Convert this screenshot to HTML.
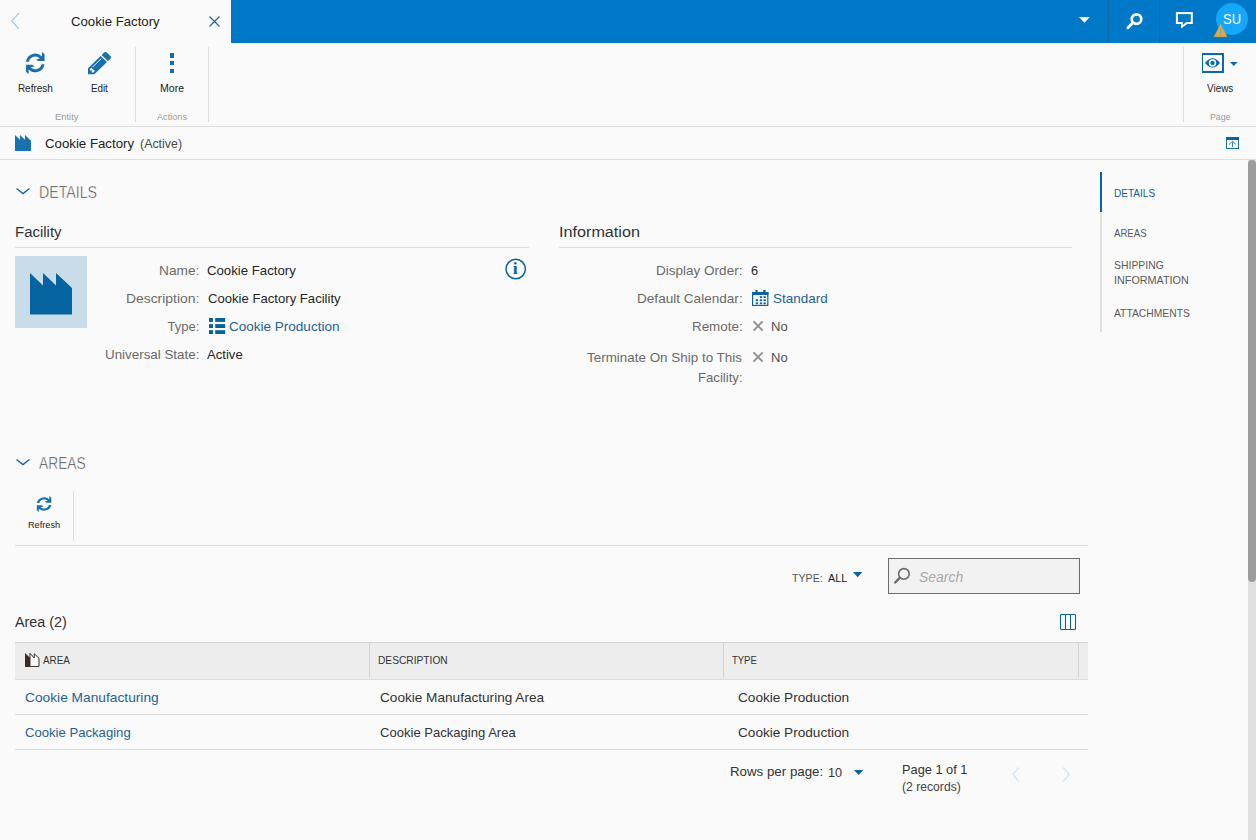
<!DOCTYPE html>
<html lang="en">
<head>
<meta charset="utf-8">
<title>Cookie Factory</title>
<style>
*{box-sizing:border-box;margin:0;padding:0}
html,body{width:1256px;height:840px;overflow:hidden;background:#fafafa;font-family:"Liberation Sans",sans-serif;color:#1f1f1f;font-size:13px}
.abs{position:absolute}
#top{position:absolute;left:0;top:0;width:1256px;height:43px;background:#0078c8}
#tab{position:absolute;left:0;top:0;width:231px;height:43px;background:#fafafa}
.t{position:absolute;white-space:nowrap;line-height:1;transform-origin:0 0}
.hl{position:absolute;height:1px;background:#dedede}
.vl{position:absolute;width:1px;background:#dedede}
svg{position:absolute;overflow:visible}
</style>
</head>
<body>
<div id="top"></div>
<div id="tab"></div>
<!-- tab -->
<svg style="left:11px;top:13px" width="8" height="16" viewBox="0 0 8 16"><path d="M7.800 0.200 L0.800 7.900 L7.800 15.700" fill="none" stroke="#a4cbe4" stroke-width="1.300"/></svg>
<svg style="left:209.100px;top:15.600px" width="11" height="11" viewBox="0 0 11 11"><path d="M0.500 0.500 L10.500 10.500 M10.500 0.500 L0.500 10.500" fill="none" stroke="#1c64a0" stroke-width="1.150"/></svg>

<!-- top right icons -->
<svg style="left:1079px;top:17px" width="11" height="6" viewBox="0 0 11 6"><path d="M0 0 H10.800 L5.400 5.800 Z" fill="#fff"/></svg>
<div class="abs" style="left:1108px;top:0;width:0;height:43px;border-left:1px dotted #0564a6"></div>
<div class="abs" style="left:1159px;top:0;width:0;height:43px;border-left:1px dotted #0564a6"></div>
<svg style="left:1126px;top:12px" width="18" height="18" viewBox="0 0 18 18"><circle cx="10.500" cy="7.100" r="4.800" fill="none" stroke="#fff" stroke-width="2.700"/><path d="M6.800 10.800 L1.900 15.700" stroke="#fff" stroke-width="3" stroke-linecap="round"/></svg>
<svg style="left:1176px;top:12px" width="17" height="17" viewBox="0 0 17 17"><rect x="0.900" y="1.100" width="14.900" height="9.900" fill="none" stroke="#fff" stroke-width="2"/><path d="M5 11 V16.400 L12.600 11 Z" fill="#fff"/><path d="M6.800 10 V13 L10.200 10 Z" fill="#0078c8"/></svg>
<div class="abs" style="left:1216px;top:3px;width:32px;height:32px;border-radius:16px;background:#14a7fb"></div>
<svg style="left:1213.600px;top:23.700px" width="13.100" height="12.900" viewBox="0 0 14 13.400" preserveAspectRatio="none"><path d="M7 0.300 L13.800 13.200 H0.200 Z" fill="#e3a93f" stroke="#e3a93f" stroke-width="0.600" stroke-linejoin="round"/><rect x="6.400" y="5" width="1.200" height="4.300" fill="#8aa0b4"/><rect x="6.400" y="10.300" width="1.200" height="1.300" fill="#8aa0b4"/></svg>

<!-- ribbon -->
<div class="hl" style="left:0;top:126px;width:1256px"></div>
<div class="vl" style="left:135px;top:47px;height:75px"></div>
<div class="vl" style="left:208px;top:47px;height:75px"></div>
<div class="vl" style="left:1183px;top:47px;height:75px"></div>
<svg style="left:0;top:0" width="1" height="1"><g transform="translate(35.300 62.950)" fill="#1a6fae"><path d="M-9.210 -1.300 A9.300 9.300 0 0 1 6.700 -6.450 L6.700 -10.800 L7.300 -10.800 L9.300 -8.500 L9.300 -1.900 L2.800 -1.900 L0.900 -3.500 L4.600 -4.400 A6.400 6.400 0 0 0 -6.270 -1.300 Z"/><path d="M-9.210 -1.300 A9.300 9.300 0 0 1 6.700 -6.450 L6.700 -10.800 L7.300 -10.800 L9.300 -8.500 L9.300 -1.900 L2.800 -1.900 L0.900 -3.500 L4.600 -4.400 A6.400 6.400 0 0 0 -6.270 -1.300 Z" transform="rotate(180)"/></g></svg>
<svg style="left:87.800px;top:51.800px" width="23" height="22.300" viewBox="128 149 1515 1515" preserveAspectRatio="none"><path d="M491 1536l91-91-235-235-91 91v107h128v128h107zm523-928q0-22-22-22-10 0-17 7l-542 542q-7 7-7 17 0 22 22 22 10 0 17-7l542-542q7-7 7-17zm-54-192l416 416-832 832h-416v-416zm683 96q0 53-37 90l-166 166-416-416 166-165q36-38 90-38 53 0 91 38l235 234q37 39 37 91z" fill="#1a6fae"/></svg>
<div class="abs" style="left:170px;top:53px;width:4px;height:4.500px;background:#0f6fb0"></div>
<div class="abs" style="left:170px;top:61px;width:4px;height:4px;background:#0f6fb0"></div>
<div class="abs" style="left:170px;top:68.500px;width:4px;height:4.500px;background:#0f6fb0"></div>
<!-- views -->
<div class="abs" style="left:1202px;top:53px;width:22px;height:20px;border:2px solid #0a6ab0;border-left-width:1.700px;background:#fff"></div>
<svg style="left:1205.300px;top:57.900px" width="15" height="9.800" viewBox="0 0 15 9.800"><path d="M0 4.900 Q7.500 -4.400 15 4.900 Q7.500 14.200 0 4.900 Z" fill="#0a6ab0"/><circle cx="7.500" cy="4.900" r="3.700" fill="#fff"/><circle cx="7.500" cy="4.900" r="2.200" fill="#0a6ab0"/></svg>
<svg style="left:1230.200px;top:62.200px" width="7.600" height="4" viewBox="0 0 7.600 4"><path d="M0 0 H7.600 L3.800 4 Z" fill="#0a6ab0"/></svg>

<!-- title bar -->
<svg style="left:15px;top:135px" width="16" height="16" viewBox="0 0 16 16"><path d="M0 0 L5 4.800 V0 L10 4.800 V0 L16 5.700 V16 H0 Z" fill="#1872ad"/></svg>
<div class="hl" style="left:0;top:159px;width:1256px"></div>
<div class="abs" style="left:1226px;top:137px;width:13px;height:12px;border:1px solid #1470b4;border-top:3px solid #0a64a0;background:#fff"></div>
<svg style="left:1228px;top:140px" width="9" height="8" viewBox="0 0 9 8"><path d="M4.500 7 V1.300 M0.900 4.600 L4.500 1.200 L8.100 4.600" fill="none" stroke="#3b86c4" stroke-width="1"/></svg>

<!-- scrollbar -->
<div class="abs" style="left:1248px;top:160px;width:8px;height:680px;background:#e0e0e0"></div>
<div class="abs" style="left:1248px;top:160px;width:8px;height:422px;border-radius:4px;background:#9c9c9c"></div>

<!-- side nav -->
<div class="vl" style="left:1100px;top:212px;width:2px;height:120px;background:#e0e0e0"></div>
<div class="abs" style="left:1100px;top:172px;width:2px;height:40px;background:#0a64a0"></div>

<!-- DETAILS section -->
<svg style="left:16px;top:188px" width="14" height="7" viewBox="0 0 14 7"><path d="M0.500 0.500 L7 5.600 L13.500 0.500" fill="none" stroke="#0a64a0" stroke-width="1.300"/></svg>
<div class="hl" style="left:15px;top:247px;width:514px"></div>
<div class="abs" style="left:15px;top:256px;width:72px;height:72px;background:#c9dcea"></div>
<svg style="left:30px;top:272.500px" width="42" height="41.500" viewBox="0 0 42 41.500"><path d="M0 0 L13 12.500 V0 L26 12.500 V0 L42 15 V41.500 H0 Z" fill="#0563a0"/></svg>
<svg style="left:209px;top:318px" width="16.200" height="16" viewBox="0 0 16.200 16"><g fill="#0563a0"><rect x="0" y="0" width="4" height="3.900"/><rect x="6.200" y="0" width="10" height="3.900"/><rect x="0" y="6.100" width="4" height="3.900"/><rect x="6.200" y="6.100" width="10" height="3.900"/><rect x="0" y="12.200" width="4" height="3.800"/><rect x="6.200" y="12.200" width="10" height="3.800"/></g></svg>
<!-- info icon -->
<svg style="left:0;top:0" width="1" height="1"><circle cx="515.700" cy="269" r="9.700" fill="none" stroke="#0a64a0" stroke-width="1.500"/></svg>
<div class="t" id="info-i" style="left:512.800px;top:260.400px;font-size:17.700px;font-weight:bold;color:#0a64a0;font-family:'Liberation Serif',serif">i</div>

<div class="hl" style="left:559px;top:247px;width:513px"></div>
<svg style="left:752.400px;top:290px" width="16.400" height="16" viewBox="0 0 16.400 16"><rect x="0.600" y="2.600" width="15.200" height="12.800" fill="#fff" stroke="#0a64a0" stroke-width="1.200"/><rect x="0" y="2" width="16.400" height="3" fill="#0a64a0"/><rect x="3.400" y="0" width="2.200" height="2.500" fill="#0a64a0"/><rect x="11.200" y="0" width="2.400" height="2.500" fill="#0a64a0"/><g fill="#0a64a0"><rect x="7.800" y="6.200" width="2.300" height="1.900"/><rect x="11.500" y="6.200" width="2.300" height="1.900"/><rect x="3.700" y="9.300" width="2.300" height="1.900"/><rect x="7.800" y="9.300" width="2.300" height="1.900"/><rect x="11.500" y="9.300" width="2.300" height="1.900"/><rect x="3.700" y="12.400" width="2.300" height="1.800"/><rect x="7.800" y="12.400" width="2.300" height="1.800"/><rect x="11.500" y="12.400" width="2.300" height="1.800"/></g></svg>
<svg style="left:753.400px;top:321px" width="10.200" height="10" viewBox="0 0 10.200 10"><path d="M0.500 0.400 L9.700 9.600 M9.700 0.400 L0.500 9.600" stroke="#8e8e8e" stroke-width="1.900" fill="none"/></svg>
<svg style="left:753.400px;top:352px" width="10.200" height="10" viewBox="0 0 10.200 10"><path d="M0.500 0.400 L9.700 9.600 M9.700 0.400 L0.500 9.600" stroke="#8e8e8e" stroke-width="1.900" fill="none"/></svg>

<!-- AREAS section -->
<svg style="left:16px;top:459px" width="14" height="7" viewBox="0 0 14 7"><path d="M0.500 0.500 L7 5.600 L13.500 0.500" fill="none" stroke="#0a64a0" stroke-width="1.300"/></svg>
<svg style="left:0;top:0" width="1" height="1"><g transform="translate(44.100 504) scale(0.780 0.720)" fill="#1a6fae"><path d="M-9.210 -1.300 A9.300 9.300 0 0 1 6.700 -6.450 L6.700 -10.800 L7.300 -10.800 L9.300 -8.500 L9.300 -1.900 L2.800 -1.900 L0.900 -3.500 L4.600 -4.400 A6.400 6.400 0 0 0 -6.270 -1.300 Z"/><path d="M-9.210 -1.300 A9.300 9.300 0 0 1 6.700 -6.450 L6.700 -10.800 L7.300 -10.800 L9.300 -8.500 L9.300 -1.900 L2.800 -1.900 L0.900 -3.500 L4.600 -4.400 A6.400 6.400 0 0 0 -6.270 -1.300 Z" transform="rotate(180)"/></g></svg>
<div class="vl" style="left:73px;top:491px;height:50px"></div>
<div class="hl" style="left:15px;top:545px;width:1073px"></div>

<svg style="left:853.300px;top:572.200px" width="9.400" height="5.200" viewBox="0 0 9.400 5.200"><path d="M0 0 H9.400 L4.700 5.200 Z" fill="#0a64a0"/></svg>
<div class="abs" style="left:888px;top:558px;width:192px;height:36px;border:1px solid #6e6e6e;background:#f2f2f2"></div>
<svg style="left:894px;top:568px" width="16" height="16.500" viewBox="0 0 16 16.500"><circle cx="9.900" cy="5.900" r="5.300" fill="none" stroke="#6a6a6a" stroke-width="1.600"/><path d="M5.700 9.800 L1.200 14.500" stroke="#6a6a6a" stroke-width="2.400" stroke-linecap="round"/></svg>

<svg style="left:1060px;top:614px" width="16" height="16" viewBox="0 0 16 16"><rect x="0.500" y="0.500" width="15" height="15" rx="0.800" fill="#fdfdfd" stroke="#0a64a0" stroke-width="1.100"/><path d="M5.500 0.500 V15.500 M10.500 0.500 V15.500" stroke="#0a64a0" stroke-width="1.100"/></svg>

<!-- table -->
<div class="abs" style="left:15px;top:642px;width:1073px;height:38px;background:#ededed;border-top:1px solid #d6d6d6;border-bottom:1px solid #dcdcdc"></div>
<div class="vl" style="left:369px;top:643px;height:35px;background:#d2d2d2"></div>
<div class="vl" style="left:723px;top:643px;height:35px;background:#d2d2d2"></div>
<div class="vl" style="left:1078px;top:643px;height:35px;background:#d2d2d2"></div>
<svg style="left:24.700px;top:653px" width="14.600" height="14" viewBox="0 0 14.600 14"><path d="M5 0.300 L9.300 5 V0.800 L14 5.200 V13.400 H5 Z" fill="#fff" stroke="#3a2a2a" stroke-width="1"/><path d="M0 0 L5 4.800 V14 H0 Z" fill="#3a2a2a"/></svg>
<div class="hl" style="left:15px;top:714px;width:1073px"></div>
<div class="hl" style="left:15px;top:749px;width:1073px"></div>

<!-- pager -->
<svg style="left:853.800px;top:770px" width="9.400" height="5" viewBox="0 0 9.400 5"><path d="M0 0 H9.400 L4.700 5 Z" fill="#0a64a0"/></svg>
<svg style="left:1012px;top:766.500px" width="8" height="15" viewBox="0 0 8 15"><path d="M6.800 0.500 L0.700 7.500 L6.800 14.500" fill="none" stroke="#d5e5f0" stroke-width="1.300"/></svg>
<svg style="left:1061.500px;top:766.500px" width="8" height="15" viewBox="0 0 8 15"><path d="M1.200 0.500 L7.300 7.500 L1.200 14.500" fill="none" stroke="#d5e5f0" stroke-width="1.300"/></svg>

<div class="t" id="tabtitle" style="left:70.83px;top:15px;font-size:13px;color:#222;transform:scaleX(1.0142);">Cookie Factory</div>
<div class="t" id="r-refresh" style="left:17.90px;top:84px;font-size:10px;color:#222;transform:scaleX(1.0000);">Refresh</div>
<div class="t" id="r-edit" style="left:90.51px;top:84px;font-size:10px;color:#222;transform:scaleX(0.9767);">Edit</div>
<div class="t" id="r-more" style="left:160.14px;top:84px;font-size:10px;color:#222;transform:scaleX(1.0530);">More</div>
<div class="t" id="r-entity" style="left:55.30px;top:113px;font-size:9px;color:#9a9a9a;transform:scaleX(1.0426);">Entity</div>
<div class="t" id="r-actions" style="left:157.17px;top:113px;font-size:9px;color:#9a9a9a;transform:scaleX(1.0170);">Actions</div>
<div class="t" id="r-views" style="left:1206.92px;top:84px;font-size:10px;color:#222;transform:scaleX(0.9903);">Views</div>
<div class="t" id="r-page" style="left:1209.85px;top:113px;font-size:9px;color:#9a9a9a;transform:scaleX(0.9689);">Page</div>
<div class="t" id="tb-title" style="left:45.22px;top:137px;font-size:13px;color:#222;transform:scaleX(1.0184);">Cookie Factory</div>
<div class="t" id="tb-active" style="left:140.37px;top:138px;font-size:12px;color:#4a4a4a;transform:scaleX(1.0347);">(Active)</div>
<div class="t" id="h-details" style="left:39.40px;top:185px;font-size:16px;color:#3c3838;transform:scaleX(0.8858);-webkit-text-stroke:0.5px #fafafa;">DETAILS</div>
<div class="t" id="h-fac" style="left:14.89px;top:225px;font-size:14px;color:#333;transform:scaleX(1.0684);">Facility</div>
<div class="t" id="l-name" style="left:159.22px;top:264px;font-size:13px;color:#6a6a6a;transform:scaleX(1.0542);">Name:</div>
<div class="t" id="v-name" style="left:207.16px;top:264px;font-size:13px;color:#262626;transform:scaleX(1.0152);">Cookie Factory</div>
<div class="t" id="l-desc" style="left:126.03px;top:292px;font-size:13px;color:#6a6a6a;transform:scaleX(1.0671);">Description:</div>
<div class="t" id="v-desc" style="left:207.52px;top:292px;font-size:13px;color:#262626;transform:scaleX(1.0088);">Cookie Factory Facility</div>
<div class="t" id="l-type" style="left:167.60px;top:320px;font-size:13px;color:#6a6a6a;transform:scaleX(1.0000);">Type:</div>
<div class="t" id="v-type" style="left:229.02px;top:320px;font-size:13px;color:#1f6298;transform:scaleX(1.0396);">Cookie Production</div>
<div class="t" id="l-us" style="left:105.39px;top:348px;font-size:13px;color:#6a6a6a;transform:scaleX(1.0285);">Universal State:</div>
<div class="t" id="v-us" style="left:207.03px;top:348px;font-size:13px;color:#262626;transform:scaleX(1.0084);">Active</div>
<div class="t" id="h-info" style="left:558.77px;top:225px;font-size:14px;color:#333;transform:scaleX(1.1560);">Information</div>
<div class="t" id="l-do" style="left:655.93px;top:264px;font-size:13px;color:#6a6a6a;transform:scaleX(1.0402);">Display Order:</div>
<div class="t" id="v-do" style="left:750.58px;top:264px;font-size:13px;color:#262626;transform:scaleX(0.9817);">6</div>
<div class="t" id="l-dc" style="left:637.22px;top:292px;font-size:13px;color:#6a6a6a;transform:scaleX(1.0444);">Default Calendar:</div>
<div class="t" id="v-dc" style="left:772.66px;top:292px;font-size:13px;color:#1f6298;transform:scaleX(1.0350);">Standard</div>
<div class="t" id="l-rem" style="left:692.26px;top:320px;font-size:13px;color:#6a6a6a;transform:scaleX(1.0299);">Remote:</div>
<div class="t" id="v-rem" style="left:771.09px;top:320px;font-size:13px;color:#505050;transform:scaleX(1.0034);">No</div>
<div class="t" id="l-term1" style="left:586.69px;top:351px;font-size:13px;color:#6a6a6a;transform:scaleX(1.0327);">Terminate On Ship to This</div>
<div class="t" id="l-term2" style="left:698.35px;top:371px;font-size:13px;color:#6a6a6a;transform:scaleX(1.0110);">Facility:</div>
<div class="t" id="v-term" style="left:771.09px;top:351px;font-size:13px;color:#505050;transform:scaleX(1.0034);">No</div>
<div class="t" id="n1" style="left:1114.01px;top:188px;font-size:11px;color:#1c5f96;transform:scaleX(0.9144);">DETAILS</div>
<div class="t" id="n2" style="left:1114.39px;top:228px;font-size:11px;color:#5a5a5a;transform:scaleX(0.8749);">AREAS</div>
<div class="t" id="n3a" style="left:1113.74px;top:260px;font-size:11px;color:#5a5a5a;transform:scaleX(0.9479);">SHIPPING</div>
<div class="t" id="n3b" style="left:1113.64px;top:275px;font-size:11px;color:#5a5a5a;transform:scaleX(0.9821);">INFORMATION</div>
<div class="t" id="n4" style="left:1114.45px;top:308px;font-size:11px;color:#5a5a5a;transform:scaleX(0.9387);">ATTACHMENTS</div>
<div class="t" id="h-areas" style="left:38.97px;top:456px;font-size:16px;color:#3c3838;transform:scaleX(0.8625);-webkit-text-stroke:0.5px #fafafa;">AREAS</div>
<div class="t" id="a-refresh" style="left:27.92px;top:521px;font-size:9px;color:#222;transform:scaleX(1.0190);">Refresh</div>
<div class="t" id="f-type" style="left:792.03px;top:573px;font-size:11px;color:#555;transform:scaleX(0.9668);">TYPE:</div>
<div class="t" id="f-all" style="left:828.12px;top:573px;font-size:11px;color:#222;transform:scaleX(0.9850);">ALL</div>
<div class="t" id="f-search" style="left:919.19px;top:569px;font-size:15px;color:#a8a8a8;transform:scaleX(0.9296);font-style:italic;">Search</div>
<div class="t" id="h-area2" style="left:15.21px;top:615px;font-size:14px;color:#333;transform:scaleX(1.0246);">Area (2)</div>
<div class="t" id="th1" style="left:43.39px;top:655px;font-size:11px;color:#333;transform:scaleX(0.8919);">AREA</div>
<div class="t" id="th2" style="left:377.57px;top:655px;font-size:11px;color:#333;transform:scaleX(0.9275);">DESCRIPTION</div>
<div class="t" id="th3" style="left:732.30px;top:655px;font-size:11px;color:#333;transform:scaleX(0.8593);">TYPE</div>
<div class="t" id="c11" style="left:25.40px;top:691px;font-size:13px;color:#1f6298;transform:scaleX(1.0573);">Cookie Manufacturing</div>
<div class="t" id="c12" style="left:380.21px;top:691px;font-size:13px;color:#333;transform:scaleX(1.0461);">Cookie Manufacturing Area</div>
<div class="t" id="c13" style="left:737.95px;top:691px;font-size:13px;color:#333;transform:scaleX(1.0458);">Cookie Production</div>
<div class="t" id="c21" style="left:25.22px;top:726px;font-size:13px;color:#1f6298;transform:scaleX(1.0086);">Cookie Packaging</div>
<div class="t" id="c22" style="left:380.35px;top:726px;font-size:13px;color:#333;transform:scaleX(1.0042);">Cookie Packaging Area</div>
<div class="t" id="c23" style="left:737.95px;top:726px;font-size:13px;color:#333;transform:scaleX(1.0458);">Cookie Production</div>
<div class="t" id="p-rpp" style="left:730.30px;top:765px;font-size:13px;color:#333;transform:scaleX(1.0234);">Rows per page:</div>
<div class="t" id="p-10" style="left:828.36px;top:766px;font-size:13px;color:#333;transform:scaleX(0.9765);">10</div>
<div class="t" id="p-page" style="left:901.75px;top:763px;font-size:13px;color:#333;transform:scaleX(0.9844);">Page 1 of 1</div>
<div class="t" id="p-rec" style="left:901.75px;top:781px;font-size:12px;color:#444;transform:scaleX(1.0140);">(2 records)</div>
<div class="t" id="su" style="left:1222.78px;top:12px;font-size:14px;color:#fff;transform:scaleX(0.9284);">SU</div>
</body>
</html>
